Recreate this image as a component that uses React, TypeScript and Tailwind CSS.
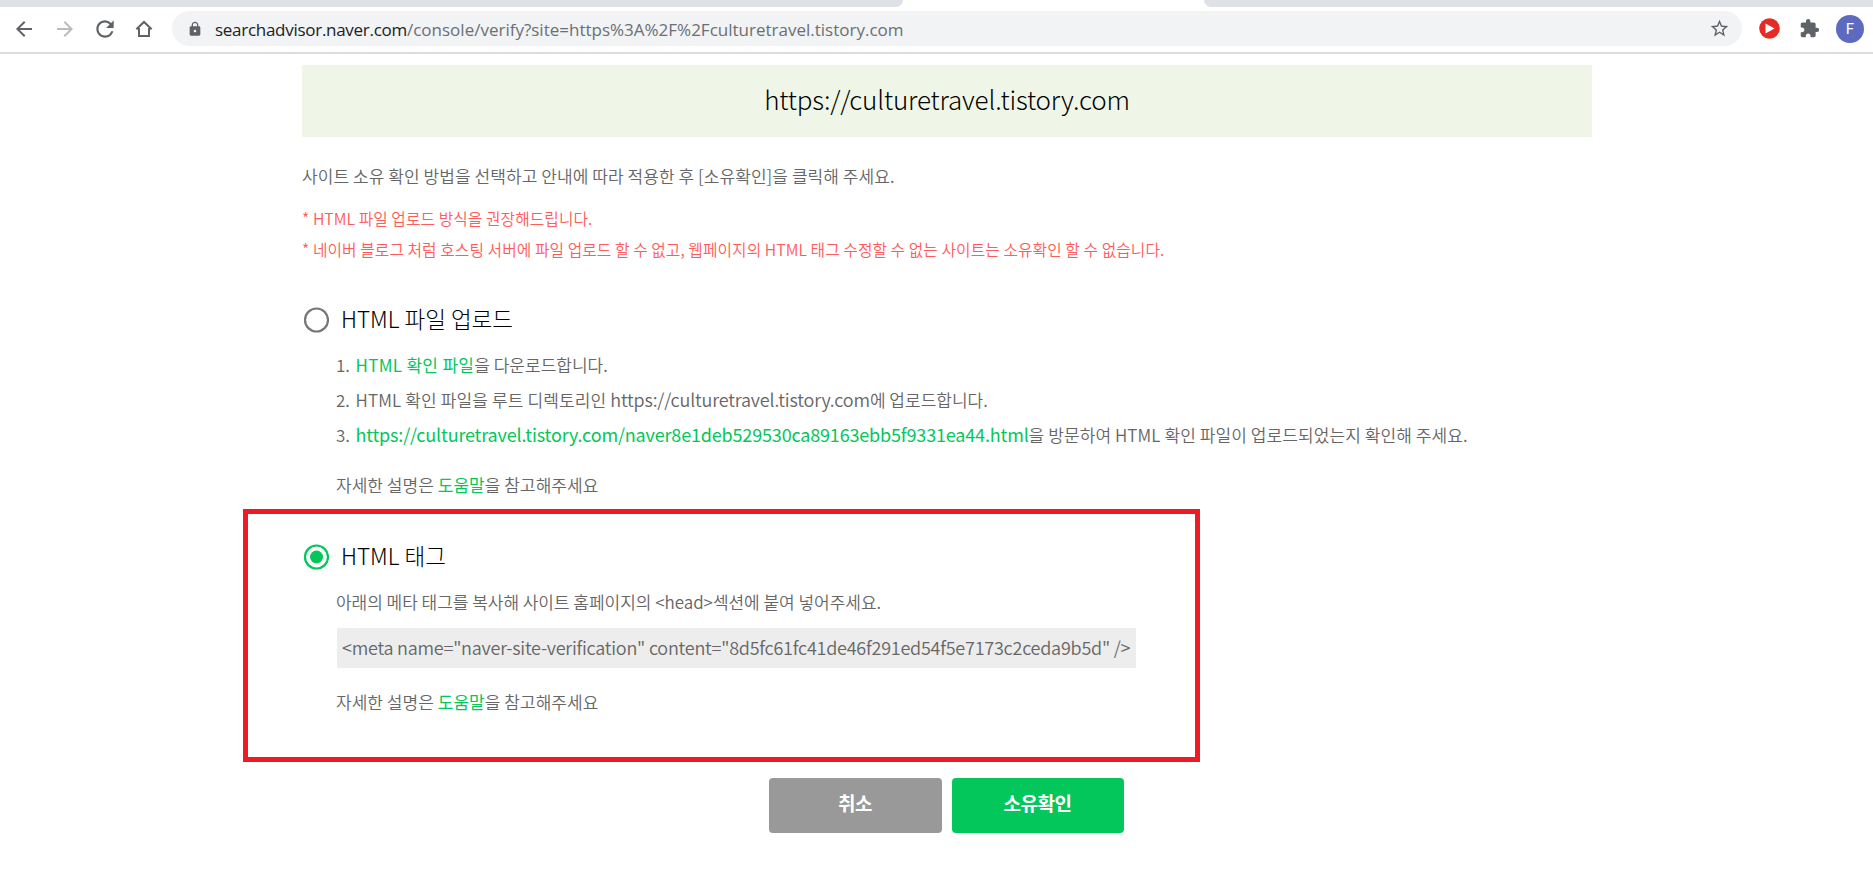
import type { ReactNode } from "react";
import {
  MdArrowBack,
  MdArrowForward,
  MdExtension,
  MdLock,
  MdRefresh,
  MdStarBorder,
} from "react-icons/md";

const SITE = "https://culturetravel.tistory.com";
const VERIFY_FILE = `${SITE}/naver8e1deb529530ca89163ebb5f9331ea44.html`;
const META_TAG =
  '<meta name="naver-site-verification" content="8d5fc61fc41de46f291ed54f5e7173c2ceda9b5d" />';

function BrowserBar() {
  return (
    <header>
      <div className="flex h-[7px] justify-between bg-white">
        <div className="w-[903px] rounded-br-[7px] bg-[#dee1e6]" />
        <div className="w-[669px] rounded-bl-[7px] bg-[#dee1e6]" />
      </div>
      <div className="flex h-[47px] items-center border-b-2 border-[#dadce0] bg-white pb-0.5 text-[#5f6368]">
        <div className="flex w-[172px] items-center pt-px pl-[12px]">
          <MdArrowBack className="mr-[17px] size-6" />
          <MdArrowForward className="mr-[15px] size-6 text-[#babcbe]" />
          <MdRefresh className="mr-[17px] size-[26px]" />
          <svg viewBox="0 0 18 18" className="size-[18px]" fill="none" stroke="currentColor" strokeWidth="2">
            <path d="M1.3 9.3 9 2l7.7 7.3M4 8v8h10V8" />
          </svg>
        </div>
        <div className="flex h-[35px] w-[1570px] items-center rounded-full bg-[#f1f3f4] pr-[12px] pl-[14px]">
          <MdLock className="mr-[12px] ml-px size-4" />
          <div className="flex-1 whitespace-nowrap pt-0.5 font-['Open_Sans',sans-serif] text-[17px] leading-6">
            <span className="tracking-[-0.28px] text-[#202124]">searchadvisor.naver.com</span>
            <span className="text-[#6b6f74]">/console/verify?site=https%3A%2F%2Fculturetravel.tistory.com</span>
          </div>
          <MdStarBorder className="size-[21px]" />
        </div>
        <svg viewBox="0 0 21 21" className="ml-[17px] size-[21px]">
          <circle cx="10.5" cy="10.5" r="10.3" fill="#e62b25" />
          <path d="M6.5 5.5v10l9-5z" fill="#fff" />
        </svg>
        <MdExtension className="ml-[19px] size-[21px]" />
        <div className="mt-px ml-4 flex size-7 items-center justify-center rounded-full bg-[#5c6bc0] font-[Roboto,sans-serif] text-[15px] text-white">
          F
        </div>
      </div>
    </header>
  );
}

function Radio({ checked }: { checked?: boolean }) {
  return (
    <svg viewBox="0 0 26 26" className="size-[26px]" fill="none">
      <circle cx="13.5" cy="13" r="11.5" stroke={checked ? "#03c75a" : "#777"} strokeWidth="2.2" />
      {checked && <circle cx="13.5" cy="13" r="6.5" fill="#03c75a" />}
    </svg>
  );
}

function MethodTitle({ checked, children }: { checked?: boolean; children: ReactNode }) {
  return (
    <label className="flex h-8 items-center pl-px">
      <span className="mt-px">
        <Radio checked={checked} />
      </span>
      <span className="-mt-[3px] ml-[12px] text-[22.5px] leading-8 font-light text-black">{children}</span>
    </label>
  );
}

function Green({ children }: { children: ReactNode }) {
  return <a className="font-normal text-[#03c75a]">{children}</a>;
}

function HelpLine() {
  return (
    <p className="h-[30px] leading-[29px] tracking-[0.04px]">
      자세한 설명은 <Green>도움말</Green>을 참고해주세요
    </p>
  );
}

export default function App() {
  return (
    <div className="relative h-[893px] w-[1873px] overflow-hidden bg-white">
      <BrowserBar />

      <main className="ml-[302px] w-[1290px] whitespace-nowrap pt-[11px] font-['Noto_Sans_CJK_KR',sans-serif] text-[17px] font-[350] text-[#666]">
        <div className="flex h-[72px] items-center justify-center bg-[#f0f6e7] text-[26px] font-light tracking-[-0.17px] text-black">
          <span className="-mt-[6px]">{SITE}</span>
        </div>

        <p className="mt-6 h-[30px] leading-[30px] tracking-[0.07px]">
          사이트 소유 확인 방법을 선택하고 안내에 따라 적용한 후 [소유확인]을 클릭해 주세요.
        </p>
        <div className="mt-3 text-[15.8px] leading-[31px] tracking-[0.05px] text-[#ff5b5b]">
          <p>* HTML 파일 업로드 방식을 권장해드립니다.</p>
          <p>
            * 네이버 블로그 처럼 호스팅 서버에 파일 업로드 할 수 없고, 웹페이지의 HTML 태그 수정할 수 없는 사이트는
            소유확인 할 수 없습니다.
          </p>
        </div>

        <section className="mt-[38px]">
          <MethodTitle>HTML 파일 업로드</MethodTitle>
          <div className="mt-3 pl-[34px]">
            <ol className="leading-[35px]">
              <li className="flex h-[35px]">
                <span className="w-[19.5px]">1.</span>
                <span className="tracking-[0.3px]">
                  <Green>HTML 확인 파일</Green>
                </span>
                <span>을 다운로드합니다.</span>
              </li>
              <li className="flex h-[35px]">
                <span className="w-[19.5px]">2.</span>
                <span className="whitespace-pre tracking-[0.14px]">{"HTML 확인 파일을 루트 디렉토리인 "}</span>
                <span className="text-[18px] tracking-[-0.15px]">{SITE}</span>
                <span>에 업로드합니다.</span>
              </li>
              <li className="flex h-[35px]">
                <span className="w-[19.5px]">3.</span>
                <span className="text-[18px] tracking-[-0.17px]">
                  <Green>{VERIFY_FILE}</Green>
                </span>
                <span className="tracking-[0.09px]">을 방문하여 HTML 확인 파일이 업로드되었는지 확인해 주세요.</span>
              </li>
            </ol>
            <div className="mt-[18px]">
              <HelpLine />
            </div>
          </div>
        </section>

        <section className="mt-10">
          <MethodTitle checked>HTML 태그</MethodTitle>
          <div className="mt-[15px] pl-[34px]">
            <p className="h-[30px] leading-[30px] tracking-[-0.03px]">
              아래의 메타 태그를 복사해 사이트 홈페이지의 &lt;head&gt;섹션에 붙여 넣어주세요.
            </p>
            <div className="mt-[11px] ml-px h-10 w-[799px] bg-[#ededed] pl-[5px] text-[18px] leading-[38px] tracking-[-0.23px]">
              {META_TAG}
            </div>
            <div className="mt-[19px]">
              <HelpLine />
            </div>
          </div>
        </section>

        <div className="mt-[61px] flex justify-center gap-[10px] pr-0.5 text-[19px] font-bold tracking-[-0.5px] text-white">
          <button className="h-[55px] w-[173px] rounded bg-[#999] pb-1">취소</button>
          <button className="h-[55px] w-[172px] rounded bg-[#03c75a] pb-1">소유확인</button>
        </div>
      </main>

      {/* highlight drawn over the tag section */}
      <div className="pointer-events-none absolute top-[509px] left-[243px] h-[253px] w-[957px] border-5 border-[#ef1b24]" />
    </div>
  );
}
